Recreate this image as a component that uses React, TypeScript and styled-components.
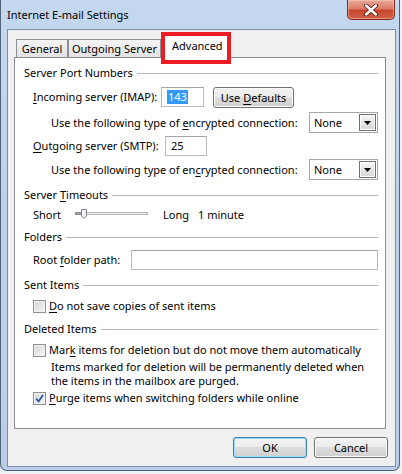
import React from 'react';
import styled, { createGlobalStyle } from 'styled-components';

const GlobalStyle = createGlobalStyle`
  html, body { margin: 0; padding: 0; background: #eef2f7; }
  body {
    font-family: "Noto Sans", "Open Sans", sans-serif;
    font-size: 11px;
    color: #000;
  }
  * { box-sizing: border-box; }
`;

const Window = styled.div`
  width: 400px;
  height: 471px;
  display: flex;
  flex-direction: column;
  background: linear-gradient(180deg, #c3d8ef 0%, #bdd3ec 40%, #b9cfe9 100%);
  border: 1px solid #51637a;
  border-top: none;
  border-radius: 0 0 7px 7px;
  padding: 0 3px 3px 6px;
`;

const TitleBar = styled.div`
  height: 29px;
  display: flex;
  justify-content: space-between;
  align-items: flex-start;
`;

const Title = styled.div`
  padding-top: 7px;
  font-size: 11px;
  line-height: 15px;
  color: #000;
`;

const CloseButton = styled.div`
  width: 48px;
  height: 20px;
  margin-right: 1px;
  border: 1px solid #7c2a1e;
  border-top: none;
  border-radius: 0 0 5px 5px;
  background: linear-gradient(180deg, #e9a99a 0%, #dc7c66 45%, #c4452c 55%, #d2644a 100%);
  box-shadow: inset 0 0 0 1px rgba(255, 210, 200, 0.45);
  display: flex;
  align-items: center;
  justify-content: center;
`;

const Client = styled.div`
  flex: 1;
  display: flex;
  flex-direction: column;
  border: 1px solid #7c8ea4;
  background: #f0f0f0;
`;

const TabArea = styled.div`
  position: relative;
  height: 27px;
  display: flex;
  align-items: flex-end;
  padding-left: 8px;
`;

const Tab = styled.div<{ $w: number }>`
  width: ${(p) => p.$w}px;
  height: 18px;
  border: 1px solid #8d9097;
  border-bottom: none;
  background: linear-gradient(180deg, #f4f4f4 0%, #ebebeb 50%, #e2e2e2 100%);
  display: flex;
  align-items: center;
  justify-content: center;
  line-height: 16px;
  padding-top: 1px;
`;

const ActiveTab = styled.div<{ $w: number }>`
  position: relative;
  z-index: 2;
  width: ${(p) => p.$w}px;
  height: 24px;
  margin-bottom: -1px;
  border: 1px solid #8d9097;
  border-bottom: none;
  background: #fff;
  display: flex;
  align-items: center;
  padding-left: 10px;
  padding-bottom: 2px;
`;

const Highlight = styled.div`
  position: absolute;
  z-index: 3;
  left: 153px;
  top: 2px;
  width: 70px;
  height: 32px;
  border: 4px solid #ec1c24;
  pointer-events: none;
`;

const Panel = styled.div`
  position: relative;
  z-index: 1;
  height: 372px;
  margin: 0 9px 0 6px;
  border: 1px solid #898c95;
  background: #fff;
  padding: 0 7px 0 9px;
  display: flex;
  flex-direction: column;
`;

const SectionHeader = styled.div<{ $mt: number }>`
  display: flex;
  align-items: center;
  height: 14px;
  margin-top: ${(p) => p.$mt}px;
  gap: 4px;
  line-height: 14px;
  white-space: nowrap;
`;

const Rule = styled.div`
  flex: 1;
  height: 1px;
  background: #b4b6ba;
`;

const Row = styled.div<{ $mt: number; $h?: number; $indent?: number; $align?: string }>`
  display: flex;
  align-items: ${(p) => p.$align || 'center'};
  height: ${(p) => p.$h ?? 20}px;
  margin-top: ${(p) => p.$mt}px;
  padding-left: ${(p) => p.$indent ?? 9}px;
  white-space: nowrap;
`;

const Label = styled.div<{ $w?: number; $mt?: number }>`
  ${(p) => (p.$w ? `width: ${p.$w}px; flex: none;` : '')}
  margin-top: ${(p) => p.$mt ?? 0}px;
  line-height: 14px;
`;

const U = styled.span`
  text-decoration: underline;
  text-underline-offset: 2px;
`;

const TextBox = styled.div<{ $w?: number }>`
  ${(p) => (p.$w ? `width: ${p.$w}px;` : 'flex: 1;')}
  height: 20px;
  border: 1px solid #b8bbc1;
  border-top-color: #a3a6ac;
  background: #fff;
  display: flex;
  align-items: center;
  padding-left: 5px;
  line-height: 14px;
`;

const Selected = styled.span`
  background: #3399ff;
  color: #fff;
  padding: 0 1px;
  line-height: 14px;
`;

const PushButton = styled.div<{ $w: number; $default?: boolean; $ml?: number }>`
  width: ${(p) => p.$w}px;
  height: 21px;
  margin-left: ${(p) => p.$ml ?? 0}px;
  border: 1px solid ${(p) => (p.$default ? '#3c7fb1' : '#707070')};
  border-radius: 3px;
  background: linear-gradient(180deg, #f2f2f2 0%, #ebebeb 49%, #dddddd 50%, #cfcfcf 100%);
  box-shadow: inset 0 0 0 1px ${(p) => (p.$default ? '#9fdcf7' : '#fcfcfc')};
  display: flex;
  align-items: center;
  justify-content: center;
  line-height: 14px;
  flex: none;
`;

const ComboBox = styled.div`
  margin-left: auto;
  width: 69px;
  height: 21px;
  border: 1px solid #a7a7a7;
  background: #fff;
  display: flex;
  align-items: center;
  justify-content: space-between;
  padding: 0 1px 0 4px;
`;

const ComboArrow = styled.div`
  width: 17px;
  height: 17px;
  border: 1px solid #707070;
  background: linear-gradient(180deg, #f6f6f6 0%, #e6e6e6 50%, #d6d6d6 100%);
  box-shadow: inset 0 0 0 1px #ffffff;
  display: flex;
  align-items: center;
  justify-content: center;
`;

const Gap = styled.div<{ $w: number }>`
  width: ${(p) => p.$w}px;
  flex: none;
`;

const CheckBox = styled.div`
  width: 13px;
  height: 13px;
  flex: none;
  border: 1px solid #8f8f8f;
  background: linear-gradient(135deg, #d6d6d6 0%, #f4f4f4 100%);
  box-shadow: inset 0 0 0 1px #f3f3f3;
  margin-right: 3px;
  display: flex;
  align-items: center;
  justify-content: center;
`;

const Note = styled.div<{ $mt: number }>`
  margin-top: ${(p) => p.$mt}px;
  padding-left: 27px;
  line-height: 14px;
`;

const Footer = styled.div`
  display: flex;
  justify-content: flex-end;
  gap: 7px;
  margin-top: 8px;
  padding-right: 7px;
`;

const Slider = () => (
  <svg width="73" height="20" viewBox="0 0 73 20">
    <rect x="0.5" y="7.5" width="72" height="2" fill="#e9ebec" stroke="#b9bcbf" />
    <rect x="0.5" y="7.5" width="6" height="2" fill="#9da3a8" stroke="#8a9096" />
    <path d="M6.5 4.5 H11.5 V11 L9 13.5 L6.5 11 Z" fill="#f1f1f1" stroke="#7e848a" />
  </svg>
);

const CloseX = () => (
  <svg width="16" height="12" viewBox="0 0 16 12">
    <path d="M3 1.5 L13 10.5 M13 1.5 L3 10.5" stroke="#5a1f16" strokeWidth="4.2" strokeLinecap="round" />
    <path d="M3 1.5 L13 10.5 M13 1.5 L3 10.5" stroke="#ffffff" strokeWidth="2.4" strokeLinecap="round" />
  </svg>
);

const DownArrow = () => (
  <svg width="7" height="4" viewBox="0 0 7 4">
    <path d="M0 0 H7 L3.5 4 Z" fill="#000" />
  </svg>
);

const Check = () => (
  <svg width="9" height="9" viewBox="0 0 9 9">
    <path d="M1.2 4.6 L3.6 7.4 L8 1" stroke="#2f4fa2" strokeWidth="1.7" fill="none" />
  </svg>
);

export default function App() {
  return (
    <>
      <GlobalStyle />
      <Window>
        <TitleBar>
          <Title>Internet E-mail Settings</Title>
          <CloseButton>
            <CloseX />
          </CloseButton>
        </TitleBar>
        <Client>
          <TabArea>
            <Tab $w={52}>General</Tab>
            <Tab $w={93}>Outgoing Server</Tab>
            <ActiveTab $w={69}>Advanced</ActiveTab>
            <Highlight />
          </TabArea>
          <Panel>
            <SectionHeader $mt={8}>
              Server Port Numbers
              <Rule />
            </SectionHeader>
            <Row $mt={7} $h={21} $align="flex-start">
              <Label $w={128} $mt={3}>
                <U>I</U>ncoming server (IMAP):
              </Label>
              <TextBox $w={43}>
                <Selected>143</Selected>
              </TextBox>
              <PushButton $w={81} $ml={9}>
                <span>
                  Use <U>D</U>efaults
                </span>
              </PushButton>
            </Row>
            <Row $mt={4} $h={21} $indent={27}>
              <Label>
                Use the following type of <U>e</U>ncrypted connection:
              </Label>
              <ComboBox>
                None
                <ComboArrow>
                  <DownArrow />
                </ComboArrow>
              </ComboBox>
            </Row>
            <Row $mt={3}>
              <Label $w={132}>
                <U>O</U>utgoing server (SMTP):
              </Label>
              <TextBox $w={42}>25</TextBox>
            </Row>
            <Row $mt={3} $h={21} $indent={27}>
              <Label>
                Use the following type of en<U>c</U>rypted connection:
              </Label>
              <ComboBox>
                None
                <ComboArrow>
                  <DownArrow />
                </ComboArrow>
              </ComboBox>
            </Row>
            <SectionHeader $mt={8}>
              <span>
                Server <U>T</U>imeouts
              </span>
              <Rule />
            </SectionHeader>
            <Row $mt={3}>
              <Label $w={42}>Short</Label>
              <Slider />
              <Gap $w={15} />
              <Label $w={35}>Long</Label>
              <Label>1 minute</Label>
            </Row>
            <SectionHeader $mt={5}>
              Folders
              <Rule />
            </SectionHeader>
            <Row $mt={6}>
              <Label $w={98}>
                Root <U>f</U>older path:
              </Label>
              <TextBox />
            </Row>
            <SectionHeader $mt={8}>
              Sent Items
              <Rule />
            </SectionHeader>
            <Row $mt={7} $h={14}>
              <CheckBox />
              <Label>
                <U>D</U>o not save copies of sent items
              </Label>
            </Row>
            <SectionHeader $mt={9}>
              Deleted Items
              <Rule />
            </SectionHeader>
            <Row $mt={7} $h={14}>
              <CheckBox />
              <Label>
                Mar<U>k</U> items for deletion but do not move them automatically
              </Label>
            </Row>
            <Note $mt={3}>
              Items marked for deletion will be permanently deleted when
              <br />
              the items in the mailbox are purged.
            </Note>
            <Row $mt={3} $h={14}>
              <CheckBox>
                <Check />
              </CheckBox>
              <Label>
                <U>P</U>urge items when switching folders while online
              </Label>
            </Row>
          </Panel>
          <Footer>
            <PushButton $w={74} $default>
              OK
            </PushButton>
            <PushButton $w={74}>Cancel</PushButton>
          </Footer>
        </Client>
      </Window>
    </>
  );
}
